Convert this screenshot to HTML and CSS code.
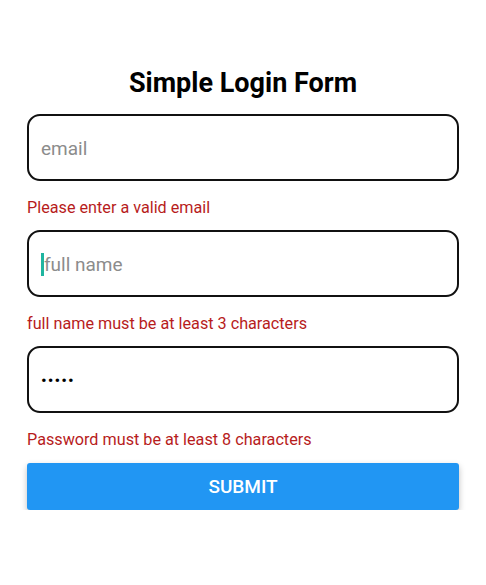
FILE: index.html
```html
<!DOCTYPE html>
<html lang="en">
<head>
    <meta charset="UTF-8">
    <meta name="viewport" content="width=device-width, initial-scale=1.0">
    <title>Simple Login Form</title>
    <link rel="stylesheet" href="styles.css">
</head>
<body>
    <div class="container">
        <h1>Simple Login Form</h1>
        <form class="login-form">
            <div class="field">
                <input type="email" class="input" placeholder="email">
                <p class="error">Please enter a valid email</p>
            </div>
            <div class="field">
                <div class="input focused"><span class="caret"></span><span class="placeholder">full name</span></div>
                <p class="error">full name must be at least 3 characters</p>
            </div>
            <div class="field">
                <input type="password" class="input password" value="12345">
                <p class="error">Password must be at least 8 characters</p>
            </div>
            <button type="button" class="submit-btn">SUBMIT</button>
        </form>
    </div>
</body>
</html>
```
FILE: styles.css
```css
body {
    margin: 0;
    background-color: #ffffff;
    font-family: "Roboto", "Liberation Sans", sans-serif;
    color: #000;
}

.container {
    padding: 65px 27px 0 27px;
}

h1 {
    margin: 0 0 13px 0;
    text-align: center;
    font-size: 27px;
    font-weight: 700;
    line-height: 36px;
}

.login-form {
    display: flex;
    flex-direction: column;
}

.field {
    display: flex;
    flex-direction: column;
}

.input {
    box-sizing: border-box;
    height: 67px;
    width: 100%;
    padding: 1px 12px 0 12px;
    border: 2px solid #111;
    border-radius: 13px;
    font-family: inherit;
    font-size: 19px;
    color: #000;
    background: #fff;
    outline: none;
}

.input::placeholder {
    color: #8c8c8c;
}

.focused {
    display: flex;
    align-items: center;
}

.caret {
    width: 3px;
    height: 23px;
    background-color: #1fb5a0;
}

.placeholder {
    color: #8c8c8c;
}

.password {
    font-size: 17px;
    letter-spacing: 1px;
}

.error {
    margin: 0;
    padding: 17px 0 13px 0;
    font-size: 16.2px;
    line-height: 19px;
    color: #b71c1c;
}

.submit-btn {
    height: 47px;
    margin-top: 1px;
    border: none;
    border-radius: 3px;
    background-color: #2196f3;
    color: #fff;
    font-family: inherit;
    font-size: 19px;
    font-weight: 500;
    box-shadow: 0 3px 6px rgba(0, 0, 0, 0.25);
    cursor: pointer;
}
```
